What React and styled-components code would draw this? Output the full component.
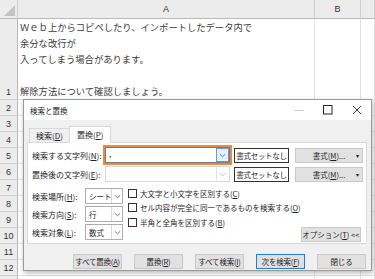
import styled, {createGlobalStyle} from "styled-components";

const GlobalStyle = createGlobalStyle`
    html, body {
        margin: 0;
        padding: 0;
        width: 375px;
        height: 279px;
        overflow: hidden;
        background: #ffffff;
    }
    body {
        font-family: "Noto Sans CJK JP", "Noto Sans", sans-serif;
    }
`

const rowNumbers = [2, 3, 4, 5, 6, 7, 8, 9, 10, 11, 12]

const lines = [
    "Ｗｅｂ上からコピペしたり、インポートしたデータ内で",
    "余分な改行が",
    "入ってしまう場合があります。",
    "",
    "解除方法について確認しましょう。",
]

function Chevron({color = "#6d6d6d"}) {
    return (
        <svg width="7" height="5" viewBox="0 0 7 5">
            <path d="M0.8 1.2 L3.5 3.8 L6.2 1.2" fill="none" stroke={color} strokeWidth="0.9"/>
        </svg>
    )
}

export default function App() {
    return (
        <>
            <GlobalStyle/>
            <Page>
                <Sheet>
                    <Corner><Triangle/></Corner>
                    <ColHeader>A</ColHeader>
                    <ColHeader>B</ColHeader>
                    <ColHeader/>
                    <RowHeader>1</RowHeader>
                    <TextCell>
                        {lines.map((l, i) => <Line key={i}>{l}</Line>)}
                    </TextCell>
                    <Cell/>
                    <Cell/>
                    {rowNumbers.map((n) => (
                        <Row key={n} label={n}/>
                    ))}
                    <Row label=""/>
                </Sheet>

                <Dialog>
                    <TitleBar>
                        <Title>検索と置換</Title>
                        <WinButtons>
                            <WinButton>
                                <svg width="10" height="10" viewBox="0 0 10 10">
                                    <path d="M0 5.5 H10" stroke="#c8c8c8" strokeWidth="0.8"/>
                                </svg>
                            </WinButton>
                            <WinButton>
                                <svg width="10" height="10" viewBox="0 0 10 10">
                                    <rect x="0.5" y="0.5" width="8.5" height="8.5" fill="none" stroke="#222" strokeWidth="1"/>
                                </svg>
                            </WinButton>
                            <WinButton>
                                <svg width="10" height="10" viewBox="0 0 10 10">
                                    <path d="M1 1 L9 9 M9 1 L1 9" stroke="#222" strokeWidth="0.9"/>
                                </svg>
                            </WinButton>
                        </WinButtons>
                    </TitleBar>

                    <Body>
                        <Tabs>
                            <Tab>検索(<u>D</u>)</Tab>
                            <Tab $active>置換(<u>P</u>)</Tab>
                        </Tabs>
                        <Panel>
                            <FieldRow>
                                <FieldLabel>検索する文字列(<u>N</u>):</FieldLabel>
                                <Highlight>
                                    <Combo>
                                        <ComboText>,</ComboText>
                                        <ComboArrow $focused><Chevron color="#3a6ea5"/></ComboArrow>
                                    </Combo>
                                </Highlight>
                                <FormatClear>書式セットなし</FormatClear>
                                <FormatButton>書式(<u>M</u>)...<Caret>▾</Caret></FormatButton>
                            </FieldRow>
                            <FieldRow>
                                <FieldLabel>置換後の文字列(<u>E</u>):</FieldLabel>
                                <Combo $plain>
                                    <ComboText/>
                                    <ComboArrow><Chevron color="#b5b5b5"/></ComboArrow>
                                </Combo>
                                <FormatClear>書式セットなし</FormatClear>
                                <FormatButton>書式(<u>M</u>)...<Caret>▾</Caret></FormatButton>
                            </FieldRow>

                            <Options>
                                <SelectColumn>
                                    <SelectRow>
                                        <SelectLabel>検索場所(<u>H</u>):</SelectLabel>
                                        <Select><SelectValue>シート</SelectValue><SelectArrow><Chevron/></SelectArrow></Select>
                                    </SelectRow>
                                    <SelectRow>
                                        <SelectLabel>検索方向(<u>S</u>):</SelectLabel>
                                        <Select><SelectValue>行</SelectValue><SelectArrow><Chevron/></SelectArrow></Select>
                                    </SelectRow>
                                    <SelectRow>
                                        <SelectLabel>検索対象(<u>L</u>):</SelectLabel>
                                        <Select><SelectValue>数式</SelectValue><SelectArrow><Chevron/></SelectArrow></Select>
                                    </SelectRow>
                                </SelectColumn>
                                <CheckColumn>
                                    <CheckRow><Box/><span>大文字と小文字を区別する(<u>C</u>)</span></CheckRow>
                                    <CheckRow><Box/><span>セル内容が完全に同一であるものを検索する(<u>O</u>)</span></CheckRow>
                                    <CheckRow><Box/><span>半角と全角を区別する(<u>B</u>)</span></CheckRow>
                                </CheckColumn>
                                <OptionButton>オプション(<u>T</u>) &lt;&lt;</OptionButton>
                            </Options>
                        </Panel>

                        <Actions>
                            <ActionButton>すべて置換(<u>A</u>)</ActionButton>
                            <ActionButton>置換(<u>R</u>)</ActionButton>
                            <ActionButton>すべて検索(<u>I</u>)</ActionButton>
                            <ActionButton $default>次を検索(<u>F</u>)</ActionButton>
                            <ActionButton>閉じる</ActionButton>
                        </Actions>
                    </Body>
                </Dialog>
            </Page>
        </>
    )
}

function Row({label}) {
    return (
        <>
            <RowHeader>{label}</RowHeader>
            <Cell/>
            <Cell/>
            <Cell/>
        </>
    )
}

const Page = styled.div`
    position: relative;
    width: 375px;
    height: 279px;
    overflow: hidden;
`

const Sheet = styled.div`
    display: grid;
    grid-template-columns: 18px 297px 46px 1fr;
    grid-template-rows: 19px 81px repeat(12, 16px);
    width: 375px;
`

const Corner = styled.div`
    position: relative;
    background: #ececec;
    border-right: 1px solid #d0d0d0;
    border-bottom: 1px solid #b8b8b8;
    box-sizing: border-box;
`

const Triangle = styled.div`
    position: absolute;
    right: 2px;
    bottom: 2px;
    width: 0;
    height: 0;
    border-left: 11px solid transparent;
    border-bottom: 11px solid #c4c4c4;
`

const ColHeader = styled.div`
    background: #ececec;
    border-right: 1px solid #d0d0d0;
    border-bottom: 1px solid #b8b8b8;
    box-sizing: border-box;
    display: flex;
    align-items: center;
    justify-content: center;
    font-family: "Liberation Sans", Arial, sans-serif;
    font-size: 9px;
    color: #333;
`

const RowHeader = styled.div`
    background: #ececec;
    border-right: 1px solid #b8b8b8;
    border-bottom: 1px solid #d0d0d0;
    box-sizing: border-box;
    display: flex;
    align-items: flex-end;
    justify-content: center;
    padding-bottom: 2px;
    font-family: "Liberation Sans", Arial, sans-serif;
    font-size: 9px;
    color: #333;
`

const Cell = styled.div`
    border-right: 1px solid #e2e2e2;
    border-bottom: 1px solid #e2e2e2;
    box-sizing: border-box;
`

const TextCell = styled(Cell)`
    padding: 0 0 0 2px;
    display: flex;
    flex-direction: column;
    justify-content: flex-end;
    overflow: visible;
    white-space: nowrap;
`

const Line = styled.div`
    height: 16.2px;
    line-height: 16.2px;
    font-size: 9.3px;
    color: #3a3a3a;
`

const Dialog = styled.div`
    position: absolute;
    left: 23px;
    top: 99px;
    width: 349px;
    height: 172px;
    box-sizing: border-box;
    border: 1px solid #9a9a9a;
    background: #f0f0f0;
    box-shadow: 1px 2px 5px rgba(0, 0, 0, 0.28);
    display: flex;
    flex-direction: column;
    font-size: 8px;
    color: #1e1e1e;
`

const TitleBar = styled.div`
    height: 20px;
    background: #ffffff;
    display: flex;
    align-items: center;
    justify-content: space-between;
    padding-left: 6px;
`

const Title = styled.span`
    font-size: 7.5px;
    color: #222;
`

const WinButtons = styled.div`
    display: flex;
    height: 100%;
`

const WinButton = styled.div`
    width: 29px;
    display: flex;
    align-items: center;
    justify-content: center;
`

const Body = styled.div`
    flex: 1;
    padding: 3px 4px 0 3px;
    display: flex;
    flex-direction: column;
`

const Tabs = styled.div`
    display: flex;
    align-items: flex-end;
    height: 19px;
    padding-left: 2px;
`

const Tab = styled.div`
    height: ${p => p.$active ? "17px" : "14px"};
    padding: 0 ${p => p.$active ? "7px" : "6px"};
    box-sizing: border-box;
    background: ${p => p.$active ? "#ffffff" : "#f0f0f0"};
    border: 1px solid #d9d9d9;
    border-bottom: ${p => p.$active ? "1px solid #ffffff" : "none"};
    margin-bottom: ${p => p.$active ? "-1px" : "0"};
    margin-left: ${p => p.$active ? "-1px" : "0"};
    position: relative;
    z-index: ${p => p.$active ? 1 : 0};
    display: flex;
    align-items: center;
    font-size: 8px;
`

const Panel = styled.div`
    height: 102px;
    box-sizing: border-box;
    background: #ffffff;
    border: 1px solid #d9d9d9;
    padding: 4px 0 0 4px;
    display: flex;
    flex-direction: column;
    gap: 3px;
`

const FieldRow = styled.div`
    display: flex;
    align-items: center;
    height: 16px;
`

const FieldLabel = styled.div`
    width: 73px;
    white-space: nowrap;
`

const Highlight = styled.div`
    margin: -2px;
    border: 2px solid #ef8a3c;
    display: flex;
`

const Combo = styled.div`
    width: 125px;
    height: 16px;
    box-sizing: border-box;
    border: 1px solid ${p => p.$plain ? "#d6d6d6" : "#7a7a7a"};
    background: #ffffff;
    display: flex;
    align-items: stretch;
`

const ComboText = styled.div`
    flex: 1;
    padding-left: 3px;
    line-height: 11px;
    font-size: 8px;
`

const ComboArrow = styled.div`
    width: 13px;
    box-sizing: border-box;
    border: 1px solid ${p => p.$focused ? "#5c9ee0" : "transparent"};
    border-left: 1px solid ${p => p.$focused ? "#5c9ee0" : "#e2e2e2"};
    background: ${p => p.$focused ? "#e6f1fb" : "#ffffff"};
    display: flex;
    align-items: center;
    justify-content: center;
`

const FormatClear = styled.div`
    margin-left: 4px;
    width: 55px;
    height: 15px;
    box-sizing: border-box;
    border: 1px solid #333;
    background: #fff;
    display: flex;
    align-items: center;
    justify-content: center;
    font-size: 7.5px;
    white-space: nowrap;
    letter-spacing: -0.3px;
`

const FormatButton = styled.div`
    position: relative;
    margin-left: 6px;
    width: 68px;
    height: 15px;
    box-sizing: border-box;
    border: 1px solid #c9c9c9;
    background: #e1e1e1;
    display: flex;
    align-items: center;
    justify-content: center;
    font-size: 7.5px;
    white-space: nowrap;
`

const Caret = styled.span`
    position: absolute;
    right: 3px;
    font-size: 6px;
    color: #222;
`

const Options = styled.div`
    display: flex;
    margin-top: 3px;
`

const SelectColumn = styled.div`
    display: flex;
    flex-direction: column;
    gap: 2px;
`

const SelectRow = styled.div`
    display: flex;
    align-items: center;
    height: 16px;
`

const SelectLabel = styled.div`
    width: 53px;
    white-space: nowrap;
`

const Select = styled.div`
    width: 38px;
    height: 16px;
    box-sizing: border-box;
    border: 1px solid #adadad;
    background: #ffffff;
    display: flex;
`

const SelectValue = styled.div`
    flex: 1;
    padding-left: 3px;
    display: flex;
    align-items: center;
    white-space: nowrap;
    font-size: 7.5px;
    overflow: hidden;
`

const SelectArrow = styled.div`
    width: 10px;
    flex-shrink: 0;
    border-left: 1px solid #dadada;
    display: flex;
    align-items: center;
    justify-content: center;
`

const CheckColumn = styled.div`
    margin-left: 5px;
    margin-top: -2px;
    display: flex;
    flex-direction: column;
`

const CheckRow = styled.div`
    height: 14.5px;
    display: flex;
    align-items: center;
    gap: 3px;
    white-space: nowrap;
    font-size: 7.5px;
`

const Box = styled.span`
    width: 9px;
    height: 9px;
    box-sizing: border-box;
    border: 1px solid #333;
    background: #fff;
`

const OptionButton = styled.div`
    margin-left: auto;
    margin-right: 5px;
    align-self: flex-end;
    margin-bottom: -2px;
    width: 65px;
    height: 15px;
    box-sizing: border-box;
    border: 1px solid #c9c9c9;
    background: #e1e1e1;
    display: flex;
    align-items: center;
    justify-content: center;
    font-size: 7.5px;
    white-space: nowrap;
`

const Actions = styled.div`
    display: flex;
    justify-content: flex-end;
    gap: 12px;
    margin-top: 10px;
    padding-right: 1px;
`

const ActionButton = styled.div`
    width: 49px;
    height: 15px;
    box-sizing: border-box;
    border: 1px solid ${p => p.$default ? "#2a7ad2" : "#c9c9c9"};
    box-shadow: ${p => p.$default ? "inset 0 0 0 1px #cfe3f7" : "none"};
    background: #e1e1e1;
    display: flex;
    align-items: center;
    justify-content: center;
    font-size: 7.5px;
    white-space: nowrap;
    letter-spacing: -0.2px;
`
